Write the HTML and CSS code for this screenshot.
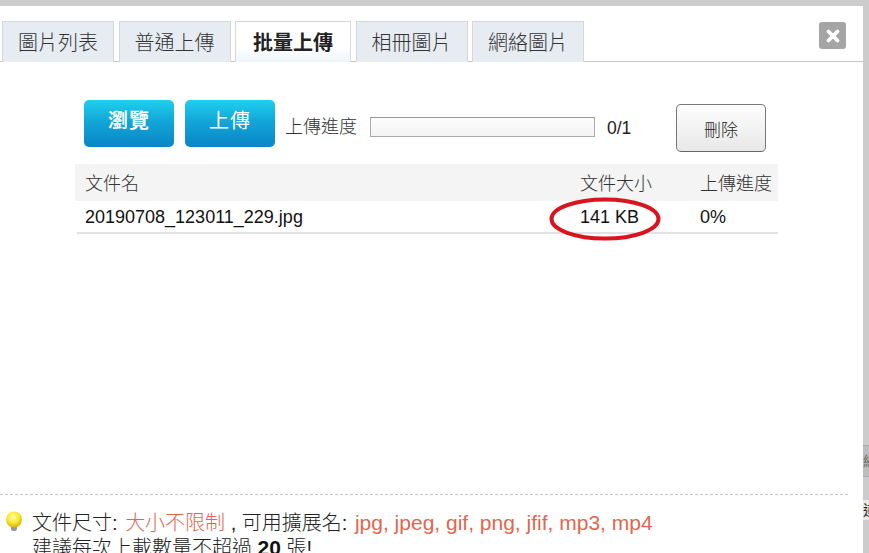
FILE: index.html
```html
<!DOCTYPE html>
<html lang="zh-Hant">
<head>
<meta charset="utf-8">
<title>批量上傳</title>
<link rel="stylesheet" href="styles.css">
</head>
<body>
<div class="page">
  <div class="dialog">
    <div class="tabbar">
      <div class="tab">圖片列表</div>
      <div class="tab">普通上傳</div>
      <div class="tab active">批量上傳</div>
      <div class="tab">相冊圖片</div>
      <div class="tab">網絡圖片</div>
      <div class="close" aria-label="close">
        <svg width="16" height="16" viewBox="0 0 16 16"><path d="M3.5 3.5 L12.5 12.5 M12.5 3.5 L3.5 12.5" stroke="#fff" stroke-width="3.8" stroke-linecap="round"/></svg>
      </div>
    </div>
    <div class="panel">
      <div class="toolbar">
        <button class="primary">瀏覽</button>
        <button class="primary">上傳</button>
        <span class="progress-label">上傳進度</span>
        <div class="progress"></div>
        <span class="count">0/1</span>
        <button class="secondary">刪除</button>
      </div>
      <div class="table">
        <div class="row head">
          <div>文件名</div><div>文件大小</div><div>上傳進度</div>
        </div>
        <div class="row body-row">
          <div>20190708_123011_229.jpg</div><div>141 KB</div><div>0%</div>
        </div>
        <svg class="circle" width="116" height="48" viewBox="0 0 116 48"><ellipse cx="57" cy="24" rx="53.5" ry="19.5" fill="none" stroke="#d8141f" stroke-width="4"/></svg>
      </div>
    </div>
    <div class="notes">
      <svg class="bulb" width="18" height="22" viewBox="0 0 18 22">
        <defs><radialGradient id="glow" cx="45%" cy="35%" r="60%"><stop offset="0" stop-color="#fffbb0"/><stop offset="0.6" stop-color="#fbe92a"/><stop offset="1" stop-color="#e0b810"/></radialGradient></defs>
        <rect x="6" y="14" width="6" height="6" rx="2" fill="#9a9a94"/>
        <circle cx="9" cy="8.5" r="8" fill="url(#glow)"/>
      </svg>
      <div class="note-text">
        <p>文件尺寸: <span class="hl">大小不限制</span> , 可用擴展名: <span class="hl latin">jpg, jpeg, gif, png, jfif, mp3, mp4</span></p>
        <p>建議每次上載數量不超過 <b>20</b> 張!</p>
      </div>
    </div>
  </div>
  <div class="edge">
    <div class="edge-box">網</div>
    <div class="edge-text">道</div>
  </div>
</div>
</body>
</html>
```
FILE: styles.css
```css
* { box-sizing: border-box; }
html, body { margin: 0; padding: 0; }
body {
  width: 869px;
  height: 553px;
  overflow: hidden;
  background: #ccc;
  font-family: "Liberation Sans", "Noto Sans CJK TC", sans-serif;
  color: #222;
}
.page { display: flex; height: 553px; padding-top: 6px; }
.dialog { width: 863px; height: 547px; background: #fff; overflow: hidden; flex: none; }

.tabbar {
  display: flex;
  gap: 4.5px;
  height: 56px;
  padding: 15px 0 0 2px;
  border-bottom: 1px solid #c8c8c8;
  position: relative;
}
.tab {
  width: 112px;
  height: 41px;
  background: #e6ecf2;
  border: 1px solid #d4d8dc;
  border-bottom: none;
  font-size: 20px;
  font-weight: 300;
  line-height: 42px;
  text-align: center;
  color: #333;
}
.tab.active {
  width: 116px;
  background: linear-gradient(#fff 60%, #eef5fa);
  font-weight: 700;
  color: #222;
  height: 41px;
}
.close {
  position: absolute;
  left: 819px;
  top: 16px;
  width: 27px;
  height: 27px;
  background: #a5a5a5;
  border-radius: 3px;
  display: flex;
  align-items: center;
  justify-content: center;
}

.panel { height: 432px; padding: 38px 85px 0 75px; }
.toolbar { display: flex; align-items: flex-start; padding-left: 9px; height: 65px; }
button { font-family: inherit; padding: 0; cursor: pointer; }
.primary {
  width: 90px;
  height: 47px;
  margin-right: 11px;
  border: none;
  border-radius: 5px;
  background: linear-gradient(#1fd0ee 0%, #12a6d8 45%, #0a85c6 100%);
  color: #fff;
  font-size: 20px;
  font-weight: 700;
  letter-spacing: 1px;
  padding-bottom: 8px;
}
.primary + .primary { font-weight: 400; }
.progress-label { font-size: 18px; font-weight: 300; margin: 14px 0 0 -1px; color: #333; width: 85px; line-height: 26px; }
.progress {
  width: 225px;
  height: 20px;
  margin-top: 17px;
  border: 1px solid #aaa;
  border-top-color: #999;
  background: linear-gradient(#fdfdfd, #f4f4f4);
}
.count { font-size: 17.5px; margin: 17px 0 0 12px; width: 69px; line-height: 22px; }
.secondary {
  width: 90px;
  height: 48px;
  margin-top: 4px;
  border: 1px solid #777;
  border-bottom-color: #666;
  border-radius: 5px;
  background: linear-gradient(#fdfdfd, #e8e8e8);
  font-size: 17px;
  font-weight: 300;
  color: #222;
}

.table { position: relative; width: 703px; margin-top: -1px; }
.row { display: grid; grid-template-columns: 505px 120px 78px; }
.row > div:first-child { padding-left: 10px; }
.head { height: 37px; background: #f4f4f4; font-size: 18px; font-weight: 300; line-height: 40px; color: #333; }
.body-row {
  height: 33px;
  margin-left: 2px;
  grid-template-columns: 503px 120px 78px;
  border-bottom: 2px solid #e2e2e2;
  font-size: 18px;
  line-height: 33px;
  color: #111;
}
.body-row > div:first-child { padding-left: 8px; }
.circle { position: absolute; left: 473px; top: 31px; }

.notes {
  display: flex;
  width: 848px;
  border-top: 1px dashed #c4c4c4;
  padding: 15px 0 0 5px;
  gap: 9px;
}
.bulb { flex: none; margin-top: 1px; }
.note-text { font-size: 20px; font-weight: 300; line-height: 25px; color: #222; white-space: nowrap; }
.note-text p { margin: 0; height: 25px; }
.hl { color: #e0674f; margin-left: 2px; }
.latin { font-size: 21px; }
.note-text b { color: #111; font-weight: 700; font-size: 21px; }

.edge { width: 6px; flex: none; position: relative; overflow: hidden; }
.edge-box {
  position: absolute;
  top: 439px;
  left: 0;
  height: 32px;
  width: 6px;
  background: #bdbdbd;
  font-size: 14px;
  line-height: 30px;
  color: #666;
  border-top: 1px solid #aaa;
  border-bottom: 1px solid #aaa;
}
.edge-text { position: absolute; top: 494px; left: 0; width: 14px; font-size: 14px; line-height: 20px; color: #222; background: #e8e8e8; }
```
